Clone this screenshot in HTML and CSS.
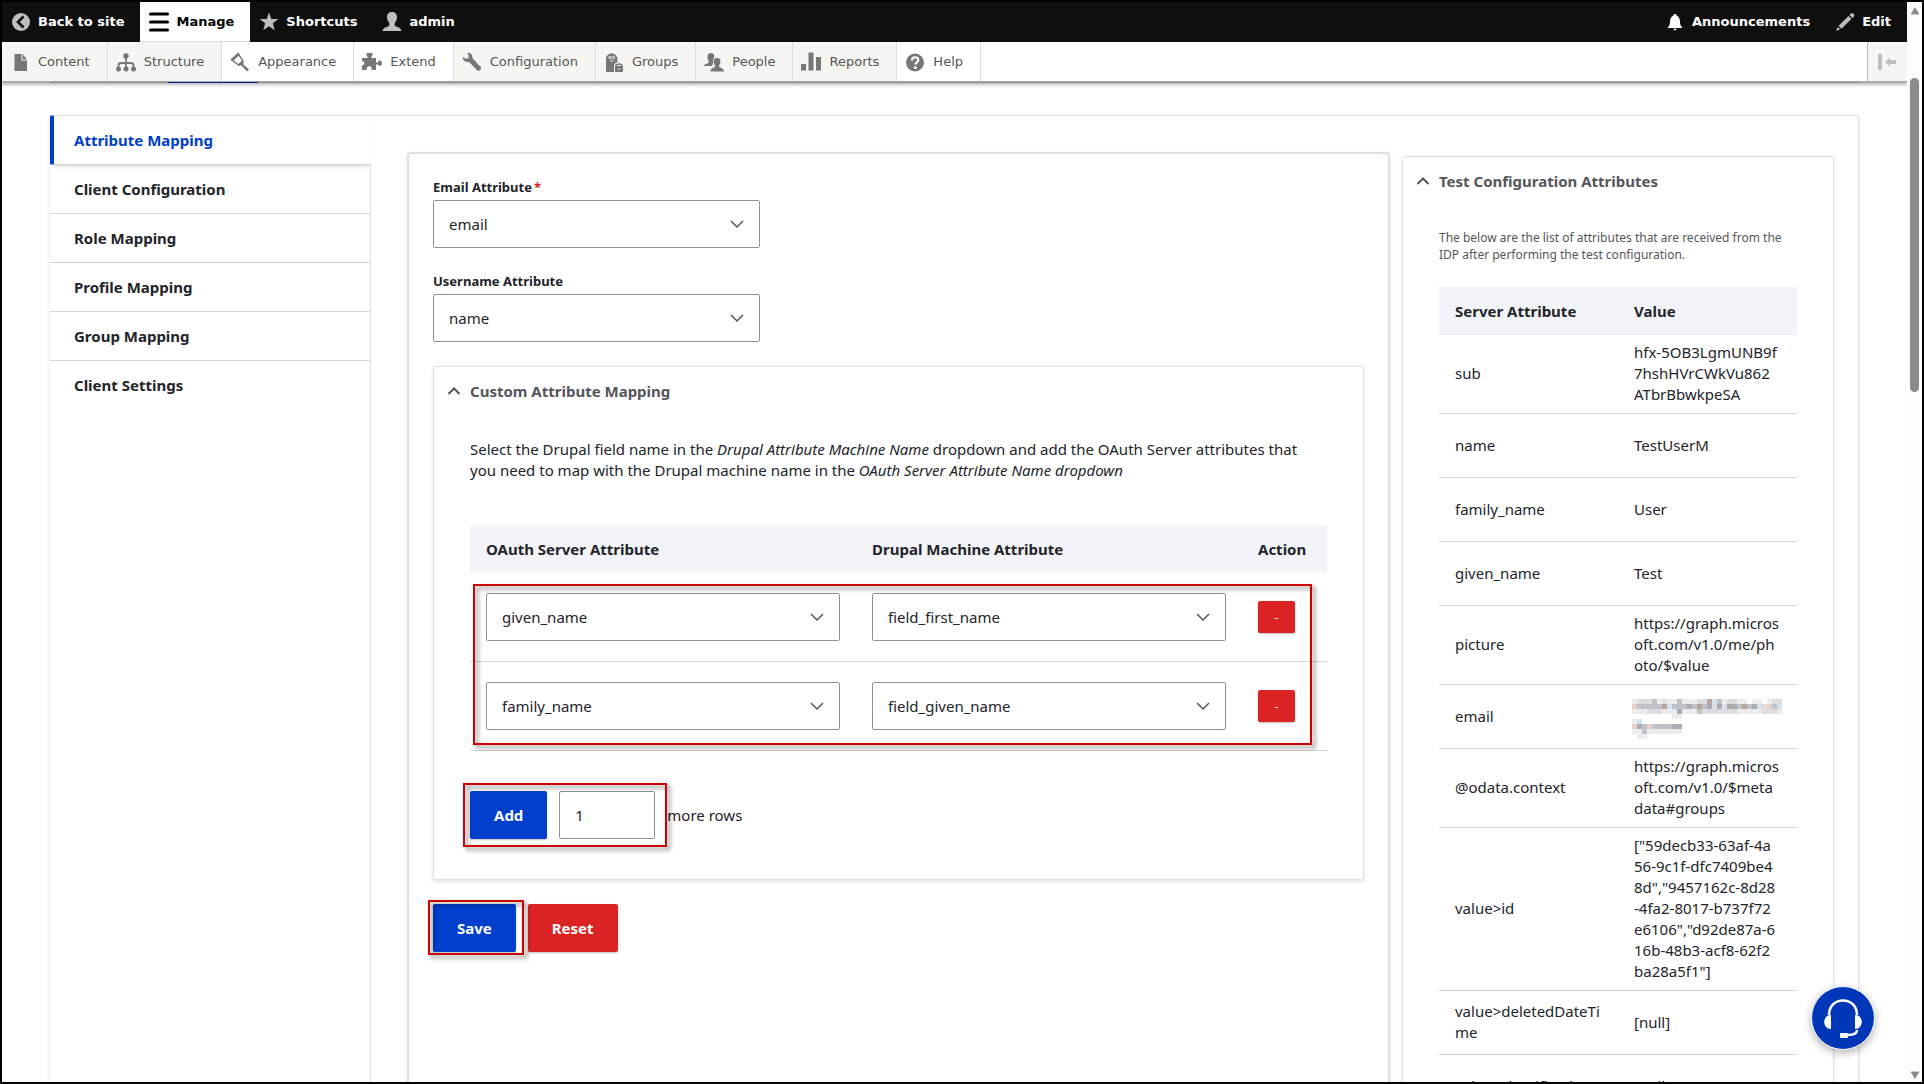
FILE: index.html
```html
<!DOCTYPE html>
<html lang="en">
  <head>
    <meta charset="UTF-8" />
    <meta name="viewport" content="width=device-width, initial-scale=1.0" />
    <title>Attribute Mapping</title>
    <link rel="stylesheet" href="styles.css">
  </head>
  <body>
    <div class="viewport">
      <header class="toolbar">
        <nav class="toolbar-bar" aria-label="Toolbar">
          <a href="#" class="toolbar-tab">
            <svg class="icon" viewBox="0 0 20 20"><circle cx="10" cy="10" r="9" fill="#bebebe"/><path d="M12.500 4.500L7 10l5.500 5.500" fill="none" stroke="#0f0f0f" stroke-width="2.600"/></svg>
            Back to site
          </a>
          <a href="#" class="toolbar-tab is-active">
            <svg class="icon" viewBox="0 0 20 20"><path d="M1.500 2h17M1.500 10h17M1.500 18h17" stroke="#000" stroke-width="3" stroke-linecap="round"/></svg>
            Manage
          </a>
          <a href="#" class="toolbar-tab">
            <svg class="icon" viewBox="0 0 20 20"><path d="M10 .5l2.300 6.500h7l-5.500 4.300 2 7L10 14.300l-5.800 4 2-7L.700 7h7z" fill="#bebebe"/></svg>
            Shortcuts
          </a>
          <a href="#" class="toolbar-tab">
            <svg class="icon" viewBox="0 0 20 20"><path d="M10 0c3 0 5 2 5 5 0 2.500-1 4.500-2.300 6v2.500c0 1 6.300 1.500 6.800 5.500H.5C1 15 7.300 14.500 7.300 13.500V11C6 9.500 5 7.500 5 5c0-3 2-5 5-5z" fill="#bebebe"/></svg>
            admin
          </a>
          <span class="spacer"></span>
          <a href="#" class="toolbar-tab">
            <svg class="icon" viewBox="0 0 20 20"><path d="M10 2c1 0 1.500.5 1.500 1.500C14 4.500 15 7 15 9.500c0 3 .8 4.500 2.500 6.500h-15C4.200 14 5 12.500 5 9.500 5 7 6 4.500 8.500 3.500 8.500 2.500 9 2 10 2zM8.500 16.700h3c0 2-3 2-3 0z" fill="#fff"/></svg>
            Announcements
          </a>
          <a href="#" class="toolbar-tab">
            <svg class="icon" viewBox="0 0 20 20"><path d="M14.500 3l2-2c.6-.6 3.600 2.100 2.900 2.900l-2 2zM13.600 3.900l2.900 2.900L6.500 16.700l-2.900-2.900zM2.900 15l2.300 2.300L1 19z" fill="#bebebe"/></svg>
            Edit
          </a>
        </nav>

        <nav class="toolbar-tray" aria-label="Administration menu">
          <a href="#" class="tray-link">
            <svg class="icon" viewBox="0 0 20 20"><path d="M4.500 2h7v6.500H17V19H4.500zM12.500 2L17 7.500h-4.500z"/></svg>
            Content
          </a>
          <a href="#" class="tray-link">
            <svg class="icon" viewBox="0 0 20 20"><circle cx="10" cy="4" r="2.700"/><path d="M10 5v12M2.500 17v-3.500Q2.500 11 5 11h10q2.500 0 2.500 2.500V17" fill="none" stroke="#777" stroke-width="1.800"/><circle cx="2.500" cy="17" r="2.500"/><circle cx="10" cy="17" r="2.500"/><circle cx="17.500" cy="17" r="2.500"/></svg>
            Structure
          </a>
          <a href="#" class="tray-link is-white">
            <svg class="icon" viewBox="0 0 20 20"><path d="M1.500 7.500L8 1.500l5 7.500-4.500 4z" fill="none" stroke="#777" stroke-width="1.400"/><path d="M.8 8L8.500.8l1.300 2L2.500 9.500zM12 8.500l2 2-1 1.500 6 5.500-2 2-5.800-6.300L9 14l-1-1.500z"/></svg>
            Appearance
          </a>
          <a href="#" class="tray-link is-white">
            <svg class="icon" viewBox="0 0 20 20"><path d="M0 6h5.500V4.500L4.500 3V1h6v2l-1 1.500V6H14v4.500h2c.5-3 4-2.500 4 .7s-3.500 3.300-4 1.300h-2V18h-4.500c1.500-5-6-5-4.800 0H0v-4.500C3 13 3 9.500 0 9z"/></svg>
            Extend
          </a>
          <a href="#" class="tray-link">
            <svg class="icon" viewBox="0 0 20 20"><path d="M5 .7c3.500-.5 6 2 5.300 5.300l8.200 8.700c2 2.300-1 5.500-3.500 3.500L7 10C3.500 10.500.7 8.500.7 4.800L4 7l2.700-1-.2-3z"/></svg>
            Configuration
          </a>
          <a href="#" class="tray-link">
            <svg class="icon" viewBox="0 0 20 20"><path d="M2 20V7c0-7.500 11-7.500 11.500 0v3.500c-2 0-3.500 1.500-3.500 4V20zM11 20v-5.500c0-4.500 8-4.500 8 0V20z"/><g fill="none" stroke="#f5f5f2"><circle cx="6" cy="5.500" r="1.200"/><circle cx="9.500" cy="5.500" r="1.200"/><path d="M6 8.500q1.700 1.500 3.500 0M13 13.500h4M15 16v2"/></g></svg>
            Groups
          </a>
          <a href="#" class="tray-link">
            <svg class="icon" viewBox="0 0 20 20"><path d="M7 1c4 0 4 4 2.300 6.500-.5 1.800.2 4-1.300 6.500H0c.3-3 5-2 5-4C3 7 2.500 1 7 1z"/><path d="M13 6c4.500 0 4 5 2 8 0 2 4.800 1.500 5 5.500H6.500c0-4 4.700-3.500 4.700-5.500C9 11 8.800 6 13 6z"/></svg>
            People
          </a>
          <a href="#" class="tray-link">
            <svg class="icon" viewBox="0 0 20 20"><path d="M0 12h5v6.500H0zM7.500.5h5v18h-5zM15 5h5v13.500h-5z"/></svg>
            Reports
          </a>
          <a href="#" class="tray-link is-white">
            <svg class="icon" viewBox="0 0 20 20"><circle cx="10" cy="10.500" r="9"/><path d="M7 8.500c0-4.500 6.300-4 6.300-.5 0 2.500-3 2.200-3 4.500" fill="none" stroke="#fff" stroke-width="2.200"/><circle cx="10.300" cy="15.500" r="1.500" fill="#fff"/></svg>
            Help
          </a>
          <span class="spacer"></span>
          <button type="button" class="tray-toggle" aria-label="Vertical orientation">
            <svg class="icon" viewBox="0 0 20 20"><path d="M1 2h4v16H1zM8 10l5-4.500v2.500h6v4h-6v2.500z" fill="#bebebe"/></svg>
          </button>
        </nav>
      </header>

      <main class="page">
        <div class="page-tabs"><span class="page-tabs-active"></span></div>

        <div class="vertical-tabs">
          <ul class="tabs-menu">
            <li class="is-selected"><a href="#">Attribute Mapping</a></li>
            <li><a href="#">Client Configuration</a></li>
            <li><a href="#">Role Mapping</a></li>
            <li><a href="#">Profile Mapping</a></li>
            <li><a href="#">Group Mapping</a></li>
            <li><a href="#">Client Settings</a></li>
          </ul>

          <form class="mapping-form">
            <div class="form-item">
              <label for="email-attr">Email Attribute<span class="required">*</span></label>
              <select id="email-attr"><option>email</option></select>
            </div>
            <div class="form-item">
              <label for="username-attr">Username Attribute</label>
              <select id="username-attr"><option>name</option></select>
            </div>

            <details class="card" open>
              <summary>
                <svg class="chevron" viewBox="0 0 14 14"><path d="M1.500 10L7 4.500 12.500 10"/></svg>
                Custom Attribute Mapping
              </summary>
              <div class="card-body">
                <p class="intro">
                  Select the Drupal field name in the <em>Drupal Attribute Machine Name</em> dropdown and add the OAuth Server attributes that<br>
                  you need to map with the Drupal machine name in the <em>OAuth Server Attribute Name dropdown</em>
                </p>

                <div class="table-wrap">
                  <table class="mapping-table">
                    <thead>
                      <tr>
                        <th>OAuth Server Attribute</th>
                        <th>Drupal Machine Attribute</th>
                        <th class="col-action">Action</th>
                      </tr>
                    </thead>
                    <tbody>
                      <tr>
                        <td><select aria-label="OAuth Server Attribute"><option>given_name</option></select></td>
                        <td><select aria-label="Drupal Machine Attribute"><option>field_first_name</option></select></td>
                        <td><button type="button" class="btn-remove">-</button></td>
                      </tr>
                      <tr>
                        <td><select aria-label="OAuth Server Attribute"><option>family_name</option></select></td>
                        <td><select aria-label="Drupal Machine Attribute"><option>field_given_name</option></select></td>
                        <td><button type="button" class="btn-remove">-</button></td>
                      </tr>
                    </tbody>
                  </table>
                  <span class="highlight highlight-rows"></span>
                </div>

                <div class="add-row">
                  <button type="button" class="btn btn-primary">Add</button>
                  <input type="text" id="row-count" value="1">
                  <label for="row-count">more rows</label>
                  <span class="highlight highlight-add"></span>
                </div>
              </div>
            </details>

            <div class="actions">
              <button type="button" class="btn btn-primary">Save</button>
              <button type="reset" class="btn btn-danger">Reset</button>
              <span class="highlight highlight-save"></span>
            </div>
          </form>

          <details class="card test-attributes" open>
            <summary>
              <svg class="chevron" viewBox="0 0 14 14"><path d="M1.500 10L7 4.500 12.500 10"/></svg>
              Test Configuration Attributes
            </summary>
            <div class="card-body">
              <p class="note">The below are the list of attributes that are received from the<br>IDP after performing the test configuration.</p>
              <table class="attr-table">
                <thead>
                  <tr><th>Server Attribute</th><th>Value</th></tr>
                </thead>
                <tbody>
                  <tr><td>sub</td><td>hfx-5OB3LgmUNB9f<br>7hshHVrCWkVu862<br>ATbrBbwkpeSA</td></tr>
                  <tr><td>name</td><td>TestUserM</td></tr>
                  <tr><td>family_name</td><td>User</td></tr>
                  <tr><td>given_name</td><td>Test</td></tr>
                  <tr><td>picture</td><td>https://graph.micros<br>oft.com/v1.0/me/ph<br>oto/$value</td></tr>
                  <tr>
                    <td>email</td>
                    <td>
                      <!-- address is masked with a mosaic -->
                      <svg class="mosaic" viewBox="0 0 30 8" shape-rendering="crispEdges" aria-hidden="true">
                        <path fill="#ececef" d="M0 0h23v1H0zM24 0h2v1h-2zM27 0h3v1h-3zM0 2h30v1H0zM8 3h2v1H8zM0 6h10v1H0zM0 4h1v1H0zM1 7h2v1H1z"/>
                        <path fill="#dcdde1" d="M1 0h3v1H1zM6 0h1v1H6zM13 0h2v1h-2zM19 0h2v1h-2zM28 0h2v1h-2zM0 1h30v1H0zM3 2h3v1H3zM14 2h7v1h-7zM26 2h3v1h-3z"/>
                        <path fill="#c0c2c7" d="M4 0h1v1H4zM9 0h1v1H9zM17 0h1v1h-1zM1 1h5v1H1zM8 1h3v1H8zM12 1h3v1h-3zM18 1h2v1h-2zM21 1h4v1h-4zM27 1h2v1h-2zM13 2h1v1h-1zM2 5h1v1H2zM4 5h4v1H4zM2 6h1v1H2z"/>
                        <path fill="#a9abb5" d="M9 2h1v1H9zM11 1h1v1h-1zM15 1h1v1h-1zM17 1h1v1h-1zM20 1h1v1h-1zM24 1h1v1h-1zM1 5h1v1H1zM8 5h2v1H8z"/>
                        <path fill="#b6a59d" d="M6 1h1v1H6zM15 0h1v1h-1zM13 1h1v1h-1zM19 1h1v1h-1zM22 1h1v1h-1z"/>
                        <path fill="#d3e1f0" d="M7 1h1v1H7zM16 0h1v1h-1zM1 4h1v1H1zM18 1h1v1h-1zM29 1h1v1h-1z"/>
                        <path fill="#e6d2c8" d="M0 1h1v1H0zM0 5h1v1H0zM3 5h1v1H3zM27 1h1v1h-1z"/>
                      </svg>
                    </td>
                  </tr>
                  <tr><td>@odata.context</td><td>https://graph.micros<br>oft.com/v1.0/$meta<br>data#groups</td></tr>
                  <tr><td>value&gt;id</td><td>["59decb33-63af-4a<br>56-9c1f-dfc7409be4<br>8d","9457162c-8d28<br>-4fa2-8017-b737f72<br>e6106","d92de87a-6<br>16b-48b3-acf8-62f2<br>ba28a5f1"]</td></tr>
                  <tr><td>value&gt;deletedDateTi<br>me</td><td>[null]</td></tr>
                  <tr><td>value&gt;classification</td><td>[null]</td></tr>
                </tbody>
              </table>
            </div>
          </details>
        </div>
      </main>

      <button type="button" class="support" aria-label="Support">
        <svg viewBox="0 0 62 62"><g fill="none" stroke="#fff" stroke-width="2.500"><path d="M17 28C17 8.500 45 8.500 45 28M45 43c0 3-3 5-9 5"/></g><path d="M19 28v14c-9 0-9-14 0-14zM43 28v14c9 0 9-14 0-14z" fill="#fff"/><rect x="28" y="46" width="8" height="5" rx="1" fill="#fff"/></svg>
      </button>
    </div>

    <div class="scrollbar" aria-hidden="true">
      <svg viewBox="0 0 10 8"><path d="M5 0l4 6.500q.3 1-.8 1H1.800q-1.100 0-.8-1z"/></svg>
      <span class="scrollbar-track"><span class="scrollbar-thumb"></span></span>
      <svg viewBox="0 0 10 8"><path d="M5 8l4-6.500q.3-1-.8-1H1.800Q.700.5 1 1.500z"/></svg>
    </div>
  </body>
</html>
```
FILE: styles.css
```css
* {
  box-sizing: border-box;
}
body {
  display: flex;
  height: 100vh;
  margin: 0;
  border: 2px solid #000;
  overflow: hidden;
  background: #fff;
  color: #232429;
  font-family: 'Segoe UI', 'Noto Sans', sans-serif;
  font-size: 15px;
  line-height: 21px;
}
a {
  color: inherit;
  text-decoration: none;
}
button,
select,
input {
  font: inherit;
}
.viewport {
  position: relative;
  flex: 1;
  min-width: 0;
  overflow: hidden;
}
.spacer {
  flex: 1;
}

/* Admin toolbar */
.toolbar {
  position: relative;
  z-index: 2;
  font-family: Verdana, 'DejaVu Sans', sans-serif;
  font-size: 13px;
  box-shadow: 0 1px 4px 1px rgba(0, 0, 0, 0.4);
}
.toolbar-bar {
  display: flex;
  height: 40px;
  background: #0f0f0f;
}
.icon {
  flex: none;
  width: 20px;
  height: 20px;
}
.toolbar-tab {
  display: flex;
  align-items: center;
  gap: 7px;
  padding: 0 16px 1px 9px;
  color: #fff;
  font-weight: bold;
}
.toolbar-tab.is-active {
  padding-bottom: 0;
  background: #fff;
  color: #000;
  border-bottom: 1px solid #ddd;
}
.toolbar-tray {
  display: flex;
  height: 40px;
  background: #fff;
  border-bottom: 1px solid #a6a6a6;
}
.tray-link {
  display: flex;
  align-items: center;
  gap: 8px;
  padding: 0 17px 0 8px;
  background: #f5f5f2;
  border-right: 1px solid #ddd;
  color: #565656;
}
.tray-link.is-white {
  background: #fff;
}
.tray-link .icon {
  fill: #777;
}
.tray-toggle {
  display: flex;
  align-items: center;
  width: 40px;
  padding: 0 9px;
  border: none;
  border-left: 1px solid #bbb;
  background: #f5f5f5;
}

/* Page */
.page {
  padding: 0 48px;
}
.page-tabs {
  height: 1px;
  margin-bottom: 32px;
  padding-left: 118px;
  background: #d3d4d9;
}
.page-tabs-active {
  display: block;
  width: 90px;
  height: 1px;
  background: #003ecc;
}
.vertical-tabs {
  display: flex;
  align-items: stretch;
  border: 1px solid #dedfe4;
  border-left: none;
  border-radius: 2px;
  box-shadow: 0 2px 4px rgba(0, 0, 0, 0.1);
}
.tabs-menu {
  flex: none;
  width: 321px;
  margin: -1px 36px 0 0;
  padding: 0;
  list-style: none;
  background: #fff;
  border-right: 1px solid #dedfe4;
  font-weight: bold;
}
.tabs-menu li {
  height: 49px;
  border-bottom: 1px solid #d3d4d9;
}
.tabs-menu li:last-child {
  border-bottom: none;
}
.tabs-menu a {
  display: block;
  padding: 14px 24px;
}
.tabs-menu .is-selected {
  height: 50px;
  margin-right: -1px;
  background: #fff;
  border-top: 1px solid #dedfe4;
  border-left: 4px solid #003ecc;
  border-radius: 2px 0 0 2px;
  box-shadow: 0 4px 4px -3px rgba(0, 0, 0, 0.2);
  color: #003ecc;
}
.tabs-menu .is-selected a {
  padding-left: 20px;
}

/* Form */
.mapping-form {
  flex: 1;
  min-width: 0;
  margin-top: 36px;
  padding: 24px;
  border: 2px solid #dedfe4;
  border-radius: 4px;
  box-shadow: 0 2px 4px rgba(0, 0, 0, 0.1);
}
.form-item {
  margin-bottom: 24px;
}
.form-item label {
  display: block;
  margin-bottom: 4px;
  font-size: 13px;
  font-weight: bold;
  line-height: 18px;
}
.form-item select {
  width: 327px;
}
.required {
  margin-left: 2px;
  color: #dc2323;
}
select,
input {
  height: 48px;
  padding: 0 15px;
  border: 1px solid #8e929c;
  border-radius: 2px;
  background: #fff;
  color: #232429;
}
select {
  display: block;
  width: 100%;
  appearance: none;
  background: #fff url("data:image/svg+xml,%3Csvg xmlns='http://www.w3.org/2000/svg' width='14' height='9'%3E%3Cpath d='M1 1l6 6 6-6' fill='none' stroke='%23545560' stroke-width='1.500'/%3E%3C/svg%3E") no-repeat right 15px center;
}

/* Collapsible cards */
.card {
  border: 1px solid #dedfe4;
  border-radius: 2px;
  box-shadow: 0 2px 4px rgba(0, 0, 0, 0.1);
}
.card summary {
  display: flex;
  align-items: center;
  gap: 9px;
  height: 48px;
  padding-left: 13px;
  color: #55565b;
  font-weight: bold;
}
.chevron {
  width: 14px;
  height: 14px;
  fill: none;
  stroke: #55565b;
  stroke-width: 2;
}
.card-body {
  padding: 24px 36px 40px;
}
.intro {
  margin: 0 0 44px;
  white-space: nowrap;
}
.table-wrap,
.add-row,
.actions {
  position: relative;
}
table {
  width: 100%;
  border-collapse: separate;
  border-spacing: 0;
  table-layout: fixed;
}
th {
  height: 48px;
  padding: 0 16px;
  background: #f3f4f9;
  text-align: left;
}
td {
  padding: 7px 16px 8px;
  border-bottom: 1px solid #d3d4d9;
}
.mapping-table td {
  padding: 20px 16px;
}
.col-action {
  width: 85px;
}
.attr-table td {
  height: 64px;
}
.mosaic {
  display: block;
  width: 150px;
  height: 40px;
  margin: 6px 0 0 -2px;
}
.note {
  margin: 0 0 24px;
  color: #55565b;
  font-size: 12px;
  line-height: 17px;
  white-space: nowrap;
}
.test-attributes {
  flex: none;
  width: 432px;
  margin: 40px 24px 24px 12px;
}

/* Buttons */
.btn {
  height: 48px;
  padding: 0 24px;
  border: none;
  border-radius: 2px;
  color: #fff;
  font-weight: bold;
  box-shadow: 0 1px 2px rgba(0, 0, 0, 0.25);
}
.btn-primary {
  background: #003ecc;
}
.btn-danger {
  background: #dc2323;
}
.btn-remove {
  display: block;
  width: 37px;
  height: 32px;
  padding: 0;
  border: none;
  border-radius: 2px;
  background: #dc2323;
  color: #fff;
  font-size: 12px;
  box-shadow: 0 1px 2px rgba(0, 0, 0, 0.25);
}
.add-row {
  display: flex;
  align-items: center;
  gap: 12px;
  margin-top: 40px;
}
.add-row input {
  width: 96px;
}
.actions {
  display: flex;
  gap: 12px;
  margin-top: 24px;
}

/* Red callout frames */
.highlight {
  position: absolute;
  border: 2px solid #cc0000;
  filter: drop-shadow(3px 3px 2px rgba(0, 0, 0, 0.5));
  pointer-events: none;
}
.highlight-rows {
  inset: 59px 15px 6px 3px;
}
.highlight-add {
  top: -8px;
  bottom: -8px;
  left: -7px;
  width: 204px;
}
.highlight-save {
  top: -4px;
  bottom: -3px;
  left: -5px;
  width: 96px;
}

.support {
  position: absolute;
  right: 32px;
  bottom: 32px;
  z-index: 3;
  width: 64px;
  height: 64px;
  padding: 0;
  border: 1px solid #fff;
  border-radius: 50%;
  background: #0036b8;
  box-shadow: 0 3px 8px rgba(0, 0, 0, 0.3);
}
.support svg {
  display: block;
}

/* Scrollbar */
.scrollbar {
  display: flex;
  flex: none;
  flex-direction: column;
  align-items: center;
  width: 15px;
  padding: 5px 0 3px;
  background: #fcfcfc;
}
.scrollbar svg {
  width: 10px;
  height: 8px;
  fill: #8b8b8b;
}
.scrollbar-track {
  flex: 1;
  padding-top: 63px;
}
.scrollbar-thumb {
  display: block;
  width: 9px;
  height: 314px;
  border-radius: 5px;
  background: #8b8b8b;
}
```
